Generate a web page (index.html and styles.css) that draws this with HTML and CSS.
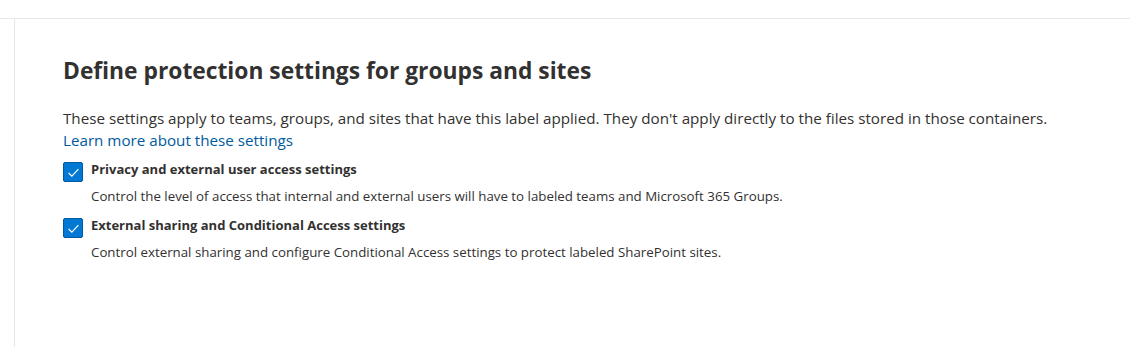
FILE: index.html
```html
<!DOCTYPE html>
<html lang="en">
<head>
    <meta charset="UTF-8">
    <meta name="viewport" content="width=device-width, initial-scale=1.0">
    <title>Define protection settings for groups and sites</title>
    <link rel="stylesheet" href="styles.css">
</head>
<body>
    <div class="top-bar"></div>
    <div class="page">
        <div class="rail"></div>
        <main class="content">
            <h1 class="title">Define protection settings for groups and sites</h1>
            <p class="intro">These settings apply to teams, groups, and sites that have this label applied. They don't apply directly to the files stored in those containers.<br>
                <a href="#" class="learn-link">Learn more about these settings</a></p>

            <!-- Privacy -->
            <div class="option">
                <span class="check" aria-hidden="true">
                    <svg width="13" height="13" viewBox="0 0 12 12"><path d="M1.5 6.5 L4.5 9.3 L10.5 2.8" fill="none" stroke="#fff" stroke-width="1.1"/></svg>
                </span>
                <div class="option-text">
                    <div class="option-label">Privacy and external user access settings</div>
                    <div class="option-desc">Control the level of access that internal and external users will have to labeled teams and Microsoft 365 Groups.</div>
                </div>
            </div>

            <!-- External sharing -->
            <div class="option">
                <span class="check" aria-hidden="true">
                    <svg width="13" height="13" viewBox="0 0 12 12"><path d="M1.5 6.5 L4.5 9.3 L10.5 2.8" fill="none" stroke="#fff" stroke-width="1.1"/></svg>
                </span>
                <div class="option-text">
                    <div class="option-label">External sharing and Conditional Access settings</div>
                    <div class="option-desc">Control external sharing and configure Conditional Access settings to protect labeled SharePoint sites.</div>
                </div>
            </div>
        </main>
    </div>
</body>
</html>
```

FILE: styles.css
```css
body {
    margin: 0;
    font-family: "Open Sans", "Noto Sans", sans-serif;
    color: #323130;
    background-color: #fff;
}
.top-bar {
    height: 18px;
    border-bottom: 1px solid #e8e8e8;
}
.page {
    display: flex;
    min-height: 328px;
}
.rail {
    width: 14px;
    border-right: 1px solid #e8e8e8;
}
.content {
    padding: 37px 0 0 48px;
}
.title {
    margin: 0;
    font-size: 22.8px;
    line-height: 30px;
    font-weight: 700;
}
.intro {
    margin: 21px 0 11px;
    font-size: 15.2px;
    line-height: 22px;
}
.learn-link {
    color: #005a9e;
    text-decoration: none;
}
.option {
    display: flex;
    gap: 8px;
    margin-bottom: 13px;
}
.check {
    flex: none;
    width: 18px;
    height: 18px;
    border: 1px solid #005a9e;
    border-radius: 2px;
    background-color: #0078d4;
    display: flex;
    align-items: center;
    justify-content: center;
}
.option-label {
    font-size: 13px;
    line-height: 14px;
    font-weight: 700;
}
.option-desc {
    margin-top: 11px;
    font-size: 13.3px;
    line-height: 18px;
}
```
